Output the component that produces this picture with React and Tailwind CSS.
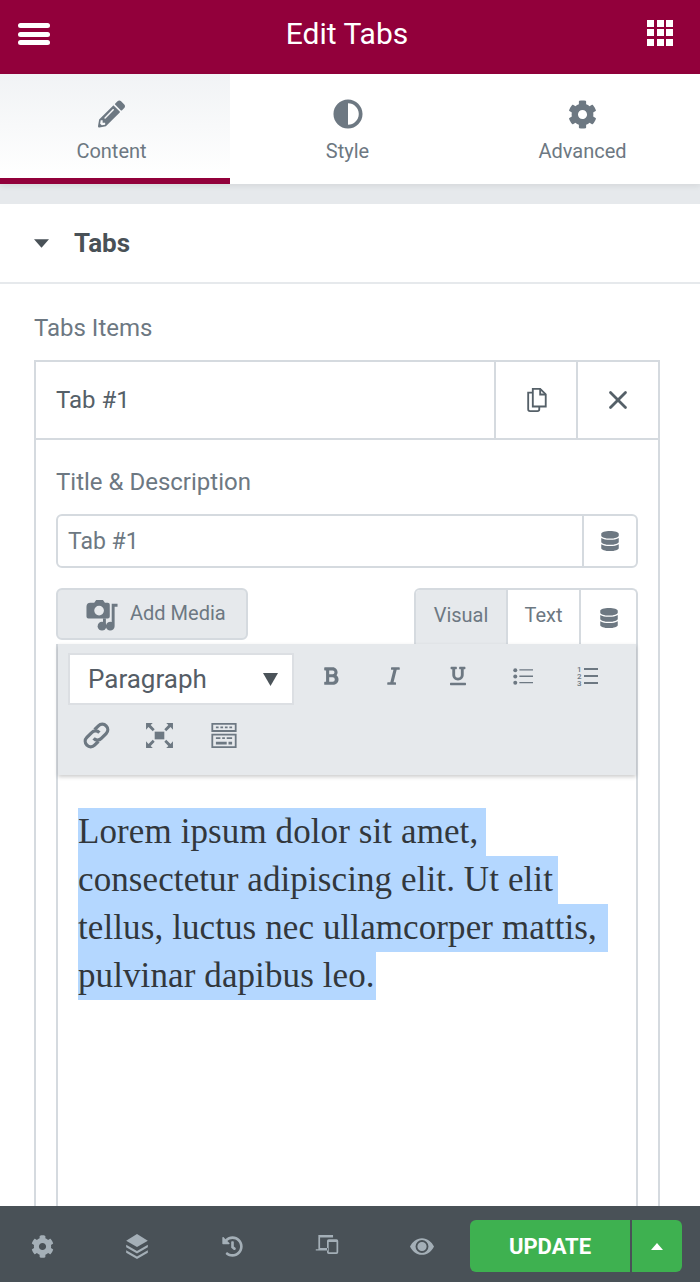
import { X } from 'lucide-react';
import { FaAdjust, FaBold, FaCog, FaDatabase, FaHistory, FaItalic, FaPencilAlt, FaUnderline } from 'react-icons/fa';

const selectedLines = [
  { text: 'Lorem ipsum dolor sit amet,', width: 'w-[408px]' },
  { text: 'consectetur adipiscing elit. Ut elit', width: 'w-[480px]' },
  { text: 'tellus, luctus nec ullamcorper mattis,', width: 'w-[530px]' },
  { text: 'pulvinar dapibus leo.', width: 'w-[298px]' },
];

function TabItem({ label, active, children }) {
  return (
    <div className={`flex-1 h-full flex flex-col items-center pt-[24px] ${active ? 'pr-[7px] border-b-[6px] border-[#92003b] bg-gradient-to-b from-[#f1f3f5] to-white' : 'bg-white'}`}>
      <div className="h-[32px] flex items-center justify-center text-[#6d7882]">{children}</div>
      <div className="mt-[9px] text-[20px] leading-[24px] text-[#6d7882]">{label}</div>
    </div>
  );
}

export default function App() {
  return (
    <div className="w-[700px] h-[1282px] overflow-hidden flex flex-col bg-white font-['Roboto',sans-serif]">
      <header className="h-[74px] shrink-0 bg-[#92003b] flex items-center justify-between pl-[18px] pr-[27px] text-white">
        <div className="flex flex-col gap-[3.5px] -mt-[6px]">
          <span className="block w-[32px] h-[5px] rounded-full bg-white" />
          <span className="block w-[32px] h-[5px] rounded-full bg-white" />
          <span className="block w-[32px] h-[5px] rounded-full bg-white" />
        </div>
        <div className="text-[30px] leading-[36px] -mt-[7px] -ml-[3px]">Edit Tabs</div>
        <div className="grid grid-cols-3 gap-[2.5px] -mt-[9px]">
          {[0, 1, 2, 3, 4, 5, 6, 7, 8].map((i) => (
            <span key={i} className="block w-[7px] h-[7px] bg-white" />
          ))}
        </div>
      </header>

      <div className="h-[110px] shrink-0 flex relative z-10 shadow-[0_2px_6px_rgba(0,0,0,0.08)]">
        <div className="w-[230px] h-full">
          <TabItem label="Content" active>
            <FaPencilAlt className="w-[27px] h-[28px]" />
          </TabItem>
        </div>
        <div className="w-[235px] h-full">
          <TabItem label="Style">
            <FaAdjust className="w-[30px] h-[30px]" />
          </TabItem>
        </div>
        <div className="w-[235px] h-full">
          <TabItem label="Advanced">
            <FaCog className="w-[29px] h-[29px]" />
          </TabItem>
        </div>
      </div>

      <div className="h-[20px] shrink-0 bg-[#e6e9ec]" />

      <div className="h-[80px] shrink-0 flex items-center border-b-2 border-[#e6e9ec] pl-[34px]">
        <svg viewBox="0 0 16 9" className="w-[15px] h-[9px] text-[#495157]" fill="currentColor">
          <path d="M0 0h16L8 9z" />
        </svg>
        <span className="ml-[25px] text-[26px] font-bold text-[#495157]">Tabs</span>
      </div>

      <div className="flex-1 min-h-0 px-[34px]">
        <div className="mt-[28px] h-[32px] text-[24px] leading-[32px] text-[#6d7882]">Tabs Items</div>
        <div className="mt-[16px] w-[626px] border-2 border-b-0 border-[#d5dadf] h-[900px]">
          <div className="h-[78px] flex border-b-2 border-[#d5dadf]">
            <div className="flex-1 pl-[20px] flex items-center text-[24px] text-[#556068]">Tab #1</div>
            <div className="w-[82px] border-l-2 border-[#d5dadf] flex items-center justify-center text-[#556068]">
              <svg viewBox="0 0 22 26" className="w-[21px] h-[24px]" fill="none" stroke="currentColor" strokeWidth="2">
                <path d="M7 1h8l6 6v13H7z" />
                <path d="M15 1v6h6" />
                <path d="M7 5H2v18a2 2 0 0 0 2 2h8a2 2 0 0 0 2-2v-3" />
              </svg>
            </div>
            <div className="w-[82px] border-l-2 border-[#d5dadf] flex items-center justify-center text-[#556068]">
              <X className="w-[30px] h-[30px]" strokeWidth={2.200} />
            </div>
          </div>

          <div className="px-[20px]">
            <div className="mt-[26px] h-[32px] text-[24px] leading-[32px] text-[#6d7882]">Title &amp; Description</div>
            <div className="mt-[16px] h-[54px] flex border-2 border-[#d5dadf] rounded-[6px]">
              <div className="flex-1 pl-[10px] pt-[3px] flex items-center text-[23px] text-[#6d7882]">Tab #1</div>
              <div className="w-[54px] border-l-2 border-[#d5dadf] flex items-center justify-center text-[#6d7882]">
                <FaDatabase className="w-[18px] h-[20px]" />
              </div>
            </div>

            <div className="mt-[20px] flex justify-between items-start">
              <div className="w-[192px] h-[52px] bg-[#e6e9ec] border-2 border-[#d5dadf] rounded-[6px] flex items-center pl-[27px] text-[#6d7882]">
                <svg viewBox="0 0 34 34" className="w-[34px] h-[33px]" fill="currentColor">
                  <path fillRule="evenodd" d="M5 5h4l2-3h7l2 3h3a2 2 0 0 1 2 2v12a2 2 0 0 1-2 2H3a2 2 0 0 1-2-2V9a4 4 0 0 1 4-4zm9 3a5 5 0 1 0 0 10 5 5 0 0 0 0-10z" />
                  <path d="M27 6h6v3h-3v20a4.500 4.500 0 1 1-3-4.200z" />
                  <circle cx="17" cy="29" r="4.500" />
                  <path d="M18 21h3v8h-3z" />
                </svg>
                <span className="ml-[11px] -mt-[2px] text-[20px]">Add Media</span>
              </div>
              <div className="w-[224px] h-[57px] flex border-2 border-b-0 border-[#d5dadf] rounded-t-[6px] overflow-hidden text-[#6d7882]">
                <div className="w-[92px] pb-[5px] bg-[#e6e9ec] border-r-2 border-[#d5dadf] flex items-center justify-center text-[20px]">Visual</div>
                <div className="w-[73px] pb-[5px] border-r-2 border-[#d5dadf] flex items-center justify-center text-[20px]">Text</div>
                <div className="flex-1 flex items-center justify-center">
                  <FaDatabase className="w-[18px] h-[20px]" />
                </div>
              </div>
            </div>

            <div className="h-[600px] border-x-2 border-[#d5dadf] -mt-px">
              <div className="h-[131px] bg-[#e6e9ec] shadow-[0_2px_4px_rgba(0,0,0,0.2)] relative pl-[10px] pt-[9px]">
                <div className="flex items-start">
                  <div className="w-[226px] h-[52px] bg-white border-2 border-[#dcdfe3] flex items-center justify-between pl-[18px] pr-[14px]">
                    <span className="text-[26px] text-[#555d66]">Paragraph</span>
                    <svg viewBox="0 0 14 12" className="w-[15px] h-[13px] text-[#4b5359]" fill="currentColor"><path d="M0 0h14L7 12z" /></svg>
                  </div>
                  <div className="flex items-center text-[#6d7882] h-[46px]">
                    <FaBold className="ml-[29px] w-[16px] h-[20px]" />
                    <FaItalic className="ml-[46px] w-[17px] h-[20px]" />
                    <FaUnderline className="ml-[48px] w-[16px] h-[20px]" />
                    <svg viewBox="0 0 22 20" className="ml-[47px] w-[20px] h-[19px]" fill="currentColor">
                      <circle cx="2.500" cy="3" r="2.200" /><circle cx="2.500" cy="10" r="2.200" /><circle cx="2.500" cy="17" r="2.200" />
                      <path d="M7 2h15v1.500H7zM7 9h15v1.500H7zM7 16h15v1.500H7z" />
                    </svg>
                    <div className="ml-[44px] w-[21px] flex items-center gap-[2px]">
                      <div className="flex flex-col text-[8px] leading-[7px] font-medium">
                        <span>1</span>
                        <span>2</span>
                        <span>3</span>
                      </div>
                      <div className="flex-1 flex flex-col gap-[5.5px]">
                        <span className="block h-[1.500px] bg-[#6d7882]" />
                        <span className="block h-[1.500px] bg-[#6d7882]" />
                        <span className="block h-[1.500px] bg-[#6d7882]" />
                      </div>
                    </div>
                  </div>
                </div>
                <div className="flex items-center mt-[17px] ml-[15px] text-[#6d7882]">
                  <svg viewBox="0 0 28 28" className="w-[27px] h-[27px]" fill="none" stroke="currentColor" strokeWidth="3.400">
                    <path d="M12 8l4-4a5.500 5.500 0 0 1 8 8l-5 5a5.500 5.500 0 0 1-8 0" />
                    <path d="M16 20l-4 4a5.500 5.500 0 0 1-8-8l5-5a5.500 5.500 0 0 1 8 0" />
                  </svg>
                  <svg viewBox="0 0 28 26" className="ml-[36px] w-[27px] h-[25px]" fill="currentColor">
                    <rect x="9" y="9" width="10" height="8" />
                    <path d="M0 0h7L4.800 2.200 9 6.500 7 8.500 2.500 4.200 0 7zM28 0h-7l2.200 2.200L19 6.500l2 2 4.500-4.300L28 7zM0 26h7l-2.200-2.200L9 19.500l-2-2-4.500 4.300L0 19zM28 26h-7l2.200-2.200L19 19.500l2-2 4.500 4.300L28 19z" />
                  </svg>
                  <svg viewBox="0 0 30 30" className="ml-[37px] w-[28px] h-[27px]" fill="currentColor">
                    <path fillRule="evenodd" d="M1 1h28v10H1zM3 3v6h24V3zM1 13h28v16H1zM3 15v12h24V15z" />
                    <path d="M6 5h3v2H6zM11 5h3v2h-3zM16 5h3v2h-3zM21 5h3v2h-3zM6 17h5v2H6zM13 17h3v2h-3zM18 17h6v2h-6zM6 22h12v3H6zM20 22h4v3h-4z" />
                  </svg>
                </div>
              </div>
              <div className="pt-[33px] pl-[20px] text-[35px] leading-[48px] tracking-[0.1px] text-[#32373c] font-['Liberation_Serif',serif]">
                {selectedLines.map((line) => (
                  <div key={line.text} className={`h-[48px] whitespace-nowrap bg-[#b4d7ff] ${line.width}`}>{line.text}</div>
                ))}
              </div>
            </div>
          </div>
        </div>
      </div>

      <footer className="h-[76px] shrink-0 bg-[#495157] flex items-center relative z-10 pt-[4px] pl-[28.5px] pr-[18px] text-[#a4afb7]">
        <div className="w-[27px] flex justify-center"><FaCog className="w-[23px] h-[23px]" /></div>
        <div className="ml-[68px] w-[27px] flex justify-center">
          <svg viewBox="0 0 26 30" className="w-[26px] h-[25px]" fill="currentColor">
            <path d="M13 0l13 8-13 7.500L0 8z" />
            <path d="M0 13l13 7.500L26 13v3L13 23.500 0 16z" />
            <path d="M0 19.500l13 7.500 13-7.500v3L13 30 0 22.500z" />
          </svg>
        </div>
        <div className="ml-[68px] w-[27px] flex justify-center"><FaHistory className="w-[21px] h-[21px]" /></div>
        <div className="ml-[68px] w-[27px] flex justify-center -mt-[3px]">
          <svg viewBox="0 0 26 22" className="w-[24px] h-[19px]" fill="currentColor">
            <path fillRule="evenodd" d="M3 0h17v3H5v12h9v3H0v-1.500h3zM15 5h9a2 2 0 0 1 2 2v13a2 2 0 0 1-2 2h-9a2 2 0 0 1-2-2V7a2 2 0 0 1 2-2zm0 3v12h9V8z" />
          </svg>
        </div>
        <div className="ml-[68px] w-[27px] flex justify-center">
          <svg viewBox="0 0 26 18" className="w-[24px] h-[17px]" fill="currentColor">
            <path fillRule="evenodd" d="M13 0c6 0 10.500 4 13 9-2.500 5-7 9-13 9S2.500 14 0 9c2.500-5 7-9 13-9zm0 2a7 7 0 1 0 0 14 7 7 0 0 0 0-14zM13 4a5 5 0 1 1 0 10 5 5 0 0 1 0-10z" />
          </svg>
        </div>
        <div className="ml-auto w-[212px] h-[52px] flex rounded-[6px] overflow-hidden bg-[#3eb150] text-white">
          <div className="w-[162px] flex items-center justify-center text-[22px] font-bold border-r-2 border-[#495157]">UPDATE</div>
          <div className="flex-1 flex items-center justify-center">
            <svg viewBox="0 0 14 8" className="w-[12px] h-[7px]" fill="currentColor"><path d="M7 0l7 8H0z" /></svg>
          </div>
        </div>
      </footer>
    </div>
  );
}
